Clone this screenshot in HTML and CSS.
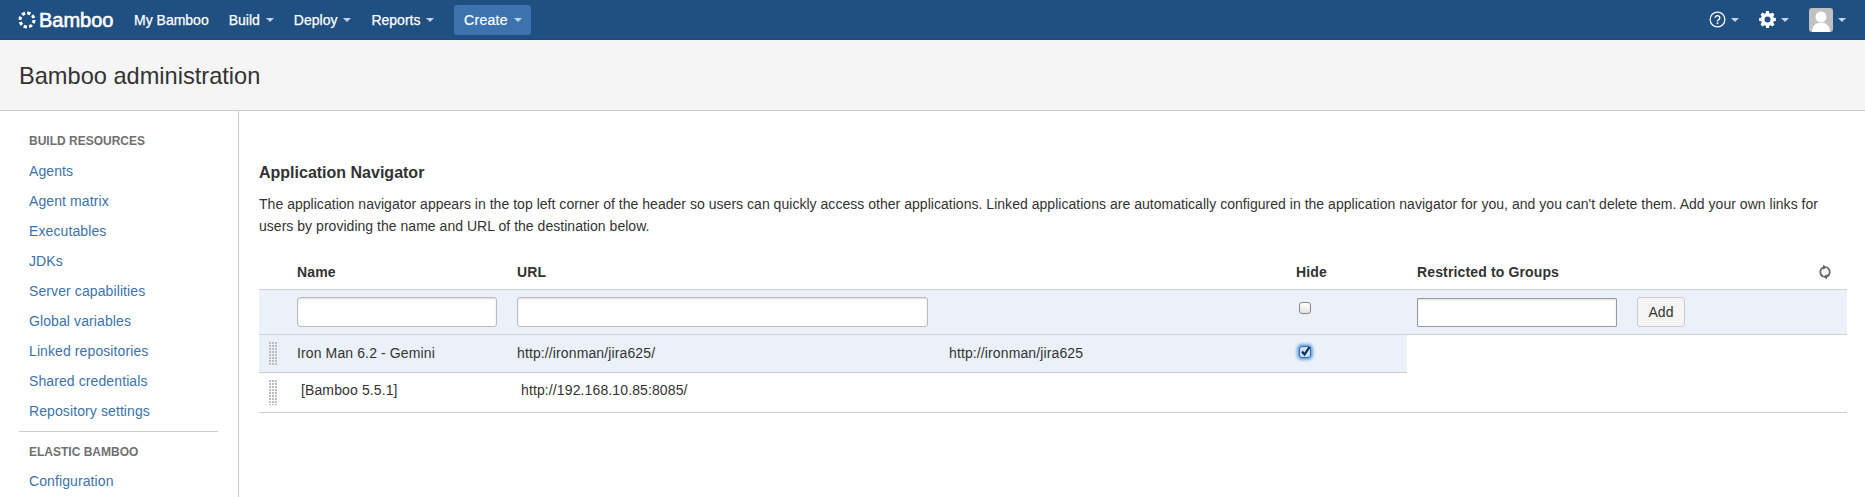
FILE: index.html
```html
<!DOCTYPE html>
<html lang="en">
<head>
<meta charset="utf-8">
<title>Bamboo administration</title>
<link rel="stylesheet" href="styles.css">
</head>
<body>
<header class="topbar">
  <a class="logo">
    <svg class="logo-mark" width="18" height="18" viewBox="0 0 18 18"><circle cx="9" cy="9" r="7" fill="none" stroke="#fff" stroke-width="3" stroke-dasharray="3.300 2.200"/></svg>
    <span>Bamboo</span>
  </a>
  <nav class="mainnav">
    <a>My Bamboo</a>
    <a class="caret">Build</a>
    <a class="caret">Deploy</a>
    <a class="caret">Reports</a>
  </nav>
  <a class="create caret">Create</a>
  <div class="tools">
    <a class="tool caret"><svg width="17" height="17" viewBox="0 0 18 18"><circle cx="9" cy="9" r="7.800" fill="none" stroke="#fff" stroke-width="1.300"/><path d="M6.600 7.200a2.400 2.400 0 1 1 3.700 2c-.9.600-1.300 1-1.300 2" fill="none" stroke="#fff" stroke-width="1.500"/><rect x="8.100" y="12.100" width="1.800" height="1.800" fill="#fff"/></svg></a>
    <a class="tool caret"><svg width="17" height="17" viewBox="0 0 18 18"><path fill="#fff" fill-rule="evenodd" d="M7.500 1h3l.4 2.200 1.400.6L14.200 2.500l2.200 2.200-1.300 1.900.6 1.400 2.200.4v3l-2.200.4-.6 1.400 1.300 1.900-2.200 2.200-1.900-1.300-1.400.6-.4 2.200h-3l-.4-2.200-1.400-.6-1.900 1.300-2.200-2.200 1.300-1.900-.6-1.400L.1 11.400v-3l2.200-.4.6-1.400L1.600 4.700 3.800 2.500l1.900 1.300 1.400-.6zM9 6.700a3.200 3.200 0 1 0 0 6.400 3.200 3.200 0 0 0 0-6.400z" transform="translate(0 -.9)"/></svg></a>
    <a class="tool caret"><span class="avatar"><svg width="24" height="24" viewBox="0 0 24 24"><circle cx="12" cy="9" r="5.500" fill="#fff"/><path d="M3 24c0-6 3-8 6-9h6c3 1 6 3 6 9z" fill="#fff"/></svg></span></a>
  </div>
</header>
<div class="pagehead"><h1>Bamboo administration</h1></div>
<div class="layout">
  <aside class="sidebar">
    <h2>BUILD RESOURCES</h2>
    <ul>
      <li><a>Agents</a></li>
      <li><a>Agent matrix</a></li>
      <li><a>Executables</a></li>
      <li><a>JDKs</a></li>
      <li><a>Server capabilities</a></li>
      <li><a>Global variables</a></li>
      <li><a>Linked repositories</a></li>
      <li><a>Shared credentials</a></li>
      <li><a>Repository settings</a></li>
    </ul>
    <hr>
    <h2>ELASTIC BAMBOO</h2>
    <ul class="tight">
      <li><a>Configuration</a></li>
    </ul>
  </aside>
  <main class="content">
    <h3>Application Navigator</h3>
    <p>The application navigator appears in the top left corner of the header so users can quickly access other applications. Linked applications are automatically configured in the application navigator for you, and you can't delete them. Add your own links for users by providing the name and URL of the destination below.</p>
    <div class="tbl">
      <div class="row head">
        <div class="c-name">Name</div>
        <div class="c-url">URL</div>
        <div class="c-hide">Hide</div>
        <div class="c-groups">Restricted to Groups</div>
        <svg class="refresh" width="14" height="16" viewBox="0 0 14 16"><path d="M5.500 3.200A5.200 5.200 0 0 0 5.500 12.800M8.500 12.800A5.200 5.200 0 0 0 8.500 3.200" fill="none" stroke="#666" stroke-width="1.700"/><path d="M5 0.700l4 2.500-4 2.500zM9 15.300l-4-2.500 4-2.500z" fill="#666"/></svg>
      </div>
      <div class="row adder">
        <div class="c-name"><input class="in in-name" type="text"></div>
        <div class="c-url"><input class="in in-url" type="text"></div>
        <div class="c-hide"><span class="cb"></span></div>
        <div class="c-groups adder-group"><input class="in in-group" type="text"><button class="add">Add</button></div>
      </div>
      <div class="row item selected">
        <span class="grip"></span>
        <div class="c-name">Iron Man 6.2 - Gemini</div>
        <div class="c-url">http://ironman/jira625/</div>
        <div class="c-display">http://ironman/jira625</div>
        <div class="c-hide"><span class="cb checked"><svg width="11" height="11" viewBox="0 0 11 11"><path d="M2 5.500l2.500 3L9.500 1" fill="none" stroke="#0b2a5a" stroke-width="2.200"/></svg></span></div>
      </div>
      <div class="row item plain">
        <span class="grip tall"></span>
        <div class="c-name indent">[Bamboo 5.5.1]</div>
        <div class="c-url indent">http://192.168.10.85:8085/</div>
      </div>
    </div>
  </main>
</div>
</body>
</html>
```
FILE: styles.css
```css
* { box-sizing: border-box; }
html, body { margin: 0; padding: 0; height: 497px; overflow: hidden; }
body { font-family: "Liberation Sans", Arial, sans-serif; font-size: 14px; color: #333; background: #fff; line-height: 20px; }
a { text-decoration: none; color: inherit; }

.topbar { height: 40px; background: #205081; border-bottom: 1px solid #1c4a78; display: flex; align-items: center; padding-left: 18px; color: #fff; }
.logo { display: flex; align-items: center; gap: 3px; font-size: 20px; font-weight: 400; -webkit-text-stroke: .6px #fff; width: 116px; }
.logo-mark { flex: none; }
.mainnav { display: flex; align-items: center; gap: 20px; font-size: 14px; font-weight: 400; -webkit-text-stroke: .25px #fff; }
.mainnav a { white-space: nowrap; }
.caret::after { content: ""; display: inline-block; margin-left: 6px; vertical-align: 3px; border: 4px solid transparent; border-top-color: #c7d3e0; border-bottom: 0; }
.create { margin-left: 20px; width: 77px; height: 30px; line-height: 30px; text-align: center; background: #3b73af; border-radius: 3px; letter-spacing: .3px; -webkit-text-stroke: .2px #fff; }
.tools { margin-left: auto; display: flex; align-items: center; gap: 20px; padding-right: 19px; }
.tool { display: flex; align-items: center; }
.tool::after { margin-left: 5px; }
.avatar { display: block; width: 24px; height: 24px; background: #c1c1c1; border-radius: 3px; overflow: hidden; }

.pagehead { height: 71px; background: #f5f5f5; border-bottom: 1px solid #ccc; padding: 20px 19px 0; }
.pagehead h1 { margin: 0; font-size: 23.600px; font-weight: 400; line-height: 32px; color: #333; }

.layout { display: flex; height: 386px; }
.sidebar { width: 239px; flex: none; border-right: 1px solid #ccc; padding: 20px 20px 0 19px; }
.sidebar h2 { margin: 0; padding-left: 10px; font-size: 12px; font-weight: 700; line-height: 20px; color: #707070; }
.sidebar ul { list-style: none; margin: 5px 0 0; padding: 0; }
.sidebar ul.tight { margin-top: 4px; }
.sidebar li { height: 30px; line-height: 30px; padding-left: 10px; color: #3b73af; white-space: nowrap; letter-spacing: .1px; }
.sidebar hr { border: 0; border-top: 1px solid #ccc; margin: 5px 0 10px; }

.content { flex: 1; padding: 52px 18px 0 20px; min-width: 0; }
.content h3 { margin: 0; font-size: 16px; font-weight: 700; line-height: 20px; color: #333; }
.content p { margin: 10px 0 0; line-height: 22px; letter-spacing: .03px; }

.tbl { margin-top: 17px; }
.row { display: flex; position: relative; align-items: center; }
.row > div { flex: none; }
.c-name { margin-left: 38px; width: 220px; }
.c-url { width: 432px; }
.c-display { width: 347px; }
.c-hide { width: 121px; }
.c-groups { width: 365px; }
.head { height: 35px; padding-top: 1px; font-weight: 700; letter-spacing: .14px; }
.head .c-url { width: 779px; }
.refresh { position: absolute; right: 15px; top: 10px; }
.adder { height: 46px; background: #ebf1f9; border-top: 1px solid #ccd2da; border-bottom: 1px solid #ccd2da; }
.adder .c-url { width: 779px; }
.adder-group { display: flex; align-items: center; gap: 20px; }
.in { height: 30px; background: #fff; border: 1px solid #bbb; border-radius: 3px; padding: 0; box-shadow: inset 0 1px 2px #ddd; display: block; }
.in-name { width: 200px; }
.in-url { width: 411px; }
.in-group { width: 200px; border-radius: 1px; border-color: #999; height: 29px; }
.add { width: 48px; height: 30px; font: 14px "Liberation Sans", Arial, sans-serif; color: #333; background: #f5f5f5; border: 1px solid #ccc; border-radius: 3px; padding: 0; }
.cb { display: block; width: 12px; height: 12px; border: 1px solid #888; border-radius: 3px; background: linear-gradient(#fff, #e4e4e4); margin: -8px 0 0 3px; }
.checked { position: relative; margin: -1px 0 0 3px; background: #cfe0f5; border-color: #2c6cb8; box-shadow: 0 0 3px 2px #6ea3df; }
.checked svg { display: block; position: absolute; left: 0; top: -1px; }
.item { width: 1148px; letter-spacing: .12px; }
.selected { height: 38px; background: #ebf1f9; border-bottom: 1px solid #ccc; padding-bottom: 2px; }
.plain { width: 100%; height: 40px; border-bottom: 1px solid #ccc; padding-bottom: 6px; }
.indent { position: relative; left: 4px; }
.grip { position: absolute; left: 10px; top: 7px; width: 8px; height: 23px; background-image: radial-gradient(circle at 1px 1px, #bdbdbd 1px, transparent 1px); background-size: 3px 3px; }
.grip.tall { height: 25px; top: 7px; }
```
